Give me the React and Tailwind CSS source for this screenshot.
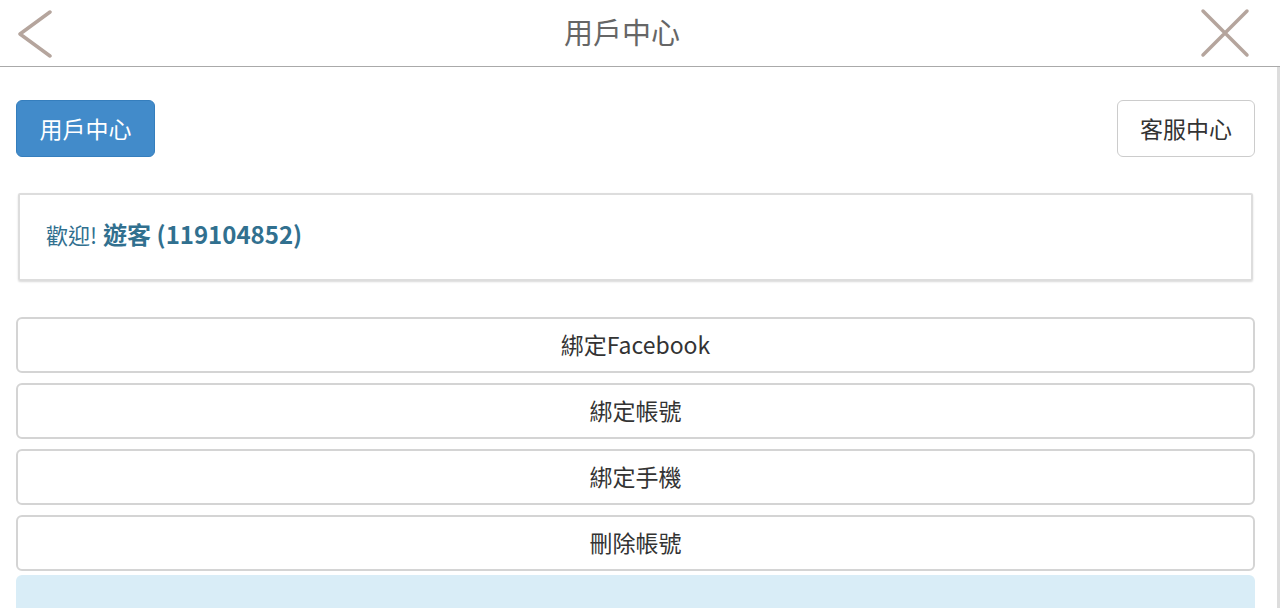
import React from 'react'

const FONT = { fontFamily: '"Noto Sans CJK TC", "Noto Sans", sans-serif' }

const ACTIONS = ['綁定Facebook', '綁定帳號', '綁定手機', '刪除帳號']

export default function App() {
  return (
    <div className="w-[1280px] h-[608px] overflow-hidden bg-white flex flex-col" style={FONT}>
      {/* Header */}
      <div className="h-[67px] shrink-0 flex items-center justify-between border-b border-[#aaaaaa] pl-[14px] pr-[30px]">
        <svg width="40" height="50" viewBox="0 0 40 50" className="text-[#b5a59d]">
          <path d="M36 4 L6 26 L36 48" fill="none" stroke="currentColor" strokeWidth="3.5" strokeLinecap="round" strokeLinejoin="round" />
        </svg>
        <h1 className="text-[29px] text-[#666666] -mt-[2px] ml-[-10px]">用戶中心</h1>
        <svg width="50" height="50" viewBox="0 0 50 50" className="text-[#b5a59d]">
          <path d="M3 3 L47 47 M47 3 L3 47" fill="none" stroke="currentColor" strokeWidth="3.5" strokeLinecap="round" />
        </svg>
      </div>

      <div className="flex-1 pl-4 pr-[22px] border-r-[3px] border-[#dddddd]">
        {/* Top buttons */}
        <div className="flex justify-between mt-[33px]">
          <button className="w-[139px] h-[57px] rounded-md bg-[#428bca] border border-[#357ebd] text-white text-[23px]">
            用戶中心
          </button>
          <button className="w-[138px] h-[57px] rounded-md bg-white border border-[#cccccc] text-[#333333] text-[23px]">
            客服中心
          </button>
        </div>

        {/* Welcome */}
        <div className="mt-[36px] mx-[2px] h-[88px] border-2 border-[#dddddd] rounded-[2px] shadow-[0_1px_2px_rgba(0,0,0,0.15)] flex items-center pb-[6px] px-[26px] text-[22px] text-[#31708f]">
          <span>歡迎!</span>
          <span className="font-bold ml-[6px] text-[24px]">遊客 (119104852)</span>
        </div>

        {/* Actions */}
        <div className="mt-[36px] flex flex-col gap-[10px]">
          {ACTIONS.map((label) => (
            <button
              key={label}
              className="h-[56px] w-full rounded-md bg-white border-2 border-[#d4d4d4] text-[#333333] text-[23px] pb-[2px]"
            >
              {label}
            </button>
          ))}
          <div className="h-[40px] -mt-[6px] rounded-md bg-[#d9edf7]" />
        </div>
      </div>
    </div>
  )
}
